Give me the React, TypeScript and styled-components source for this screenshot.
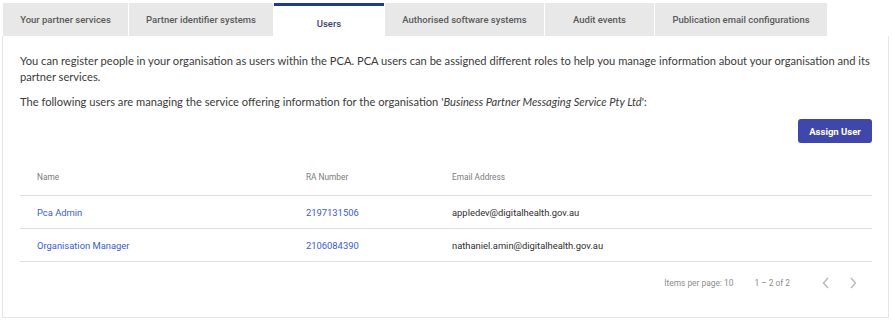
import styled, { createGlobalStyle } from "styled-components";

const GlobalStyle = createGlobalStyle`
  body {
    margin: 0;
    background: #ffffff;
    font-family: Roboto, "Liberation Sans", sans-serif;
  }
`;

const tabs = [
  { label: "Your partner services", width: 125 },
  { label: "Partner identifier systems", width: 144 },
  { label: "Users", width: 110 },
  { label: "Authorised software systems", width: 159 },
  { label: "Audit events", width: 109 },
  { label: "Publication email configurations", width: 172 },
];

const users = [
  { name: "Pca Admin", ra: "2197131506", email: "appledev@digitalhealth.gov.au" },
  { name: "Organisation Manager", ra: "2106084390", email: "nathaniel.amin@digitalhealth.gov.au" },
];

const App = () => {
  return (
    <>
      <GlobalStyle />
      <Page>
        <TabBar>
          {tabs.map((t) => (
            <Tab key={t.label} $active={t.label === "Users"} style={{ width: t.width }}>
              {t.label}
            </Tab>
          ))}
        </TabBar>
        <Panel>
          <Intro>
            You can register people in your organisation as users within the PCA. PCA users can be assigned
            different roles to help you manage information about your organisation and its partner services.
          </Intro>
          <Intro>
            The following users are managing the service offering information for the organisation '
            <em>Business Partner Messaging Service Pty Ltd</em>':
          </Intro>
          <Actions>
            <AssignButton>Assign User</AssignButton>
          </Actions>
          <Table>
            <HeaderRow>
              <HeadCell>Name</HeadCell>
              <HeadCell>RA Number</HeadCell>
              <HeadCell>Email Address</HeadCell>
            </HeaderRow>
            {users.map((u) => (
              <Row key={u.ra}>
                <LinkCell>{u.name}</LinkCell>
                <LinkCell>{u.ra}</LinkCell>
                <Cell>{u.email}</Cell>
              </Row>
            ))}
          </Table>
          <Paginator>
            <PageInfo>Items per page: 10</PageInfo>
            <PageRange>1 – 2 of 2</PageRange>
            <PageArrows>
              <Arrow viewBox="0 0 8 12">
                <path d="M6 1 L1.5 6 L6 11" />
              </Arrow>
              <Arrow viewBox="0 0 8 12">
                <path d="M2 1 L6.5 6 L2 11" />
              </Arrow>
            </PageArrows>
          </Paginator>
        </Panel>
      </Page>
    </>
  );
};

export default App;

const Page = styled.div`
  padding: 3px 0 0 2px;
  width: 887px;
`;

const TabBar = styled.div`
  display: flex;
  gap: 1px;
  padding-left: 1px;
  height: 33px;
`;

const Tab = styled.div<{ $active?: boolean }>`
  box-sizing: border-box;
  display: flex;
  align-items: center;
  justify-content: center;
  font-size: 9.5px;
  font-weight: 500;
  color: ${(p) => (p.$active ? "#3c4270" : "#5a5a5a")};
  background: ${(p) => (p.$active ? "#ffffff" : "#e8e8e8")};
  border-top: ${(p) => (p.$active ? "3px solid #1e3a8a" : "none")};
  padding-top: ${(p) => (p.$active ? "5px" : "0")};
`;

const Panel = styled.div`
  box-sizing: border-box;
  height: 282px;
  border: 1px solid #e6e6e6;
  border-top: none;
  padding: 17px 16px 0 17px;
  display: flex;
  flex-direction: column;
`;

const Intro = styled.p`
  margin: 0 0 9px;
  font-family: Lato, "Open Sans", sans-serif;
  font-size: 11.15px;
  line-height: 16px;
  color: #3a3a3a;

  em {
    font-style: italic;
  }
`;

const Actions = styled.div`
  display: flex;
  justify-content: flex-end;
`;

const AssignButton = styled.button`
  width: 74px;
  height: 24px;
  border: none;
  border-radius: 3px;
  background: #3f48aa;
  color: #ffffff;
  font-family: Roboto, "Liberation Sans", sans-serif;
  font-size: 9.5px;
  font-weight: 700;
  padding: 0;
`;

const Table = styled.div`
  margin-top: 15px;
  display: flex;
  flex-direction: column;
`;

const columns = "269px 146px 1fr";

const HeaderRow = styled.div`
  display: grid;
  grid-template-columns: ${columns};
  height: 37px;
  align-items: center;
  padding-left: 17px;
  border-bottom: 1px solid #e0e0e0;
`;

const Row = styled.div`
  display: grid;
  grid-template-columns: ${columns};
  height: 32px;
  align-items: center;
  padding-left: 17px;
  border-bottom: 1px solid #e0e0e0;
`;

const HeadCell = styled.div`
  font-size: 8.3px;
  color: #7a7a7a;
`;

const Cell = styled.div`
  font-size: 9.4px;
  color: #2e2e2e;
`;

const LinkCell = styled(Cell)`
  color: #3b5bd6;
  cursor: pointer;
`;

const Paginator = styled.div`
  display: flex;
  align-items: center;
  justify-content: flex-end;
  height: 41px;
  font-size: 8.4px;
  color: #8c8c8c;
`;

const PageInfo = styled.span`
  margin-right: 21px;
`;

const PageRange = styled.span`
  margin-right: 32px;
`;

const PageArrows = styled.div`
  display: flex;
  gap: 19px;
  margin-right: 15px;
`;

const Arrow = styled.svg`
  width: 8px;
  height: 12px;
  fill: none;
  stroke: #b5b5b5;
  stroke-width: 1.3;
`;
